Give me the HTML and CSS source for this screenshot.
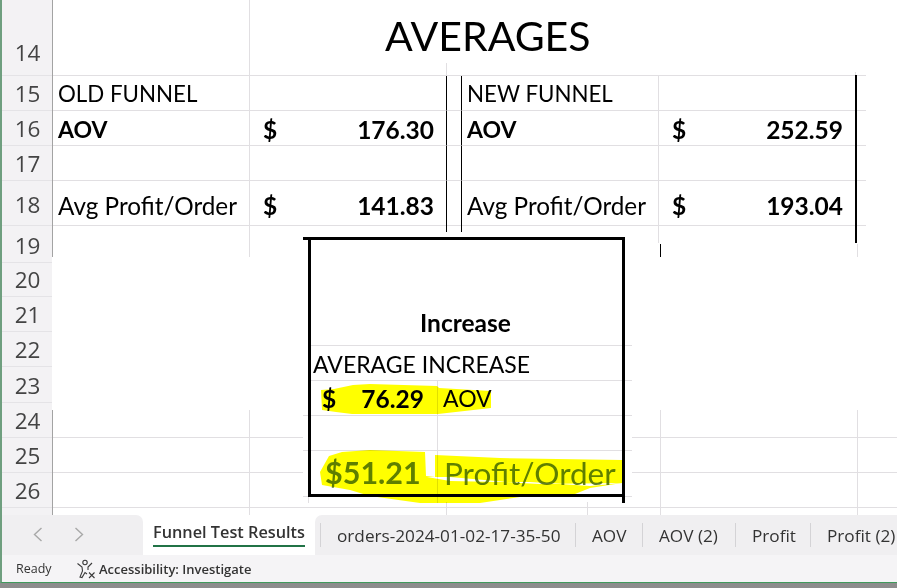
FILE: index.html
```html
<!DOCTYPE html>
<html lang="en">
<head>
    <meta charset="UTF-8">
    <meta name="viewport" content="width=device-width, initial-scale=1.0">
    <title>Funnel Test Results</title>
    <link rel="stylesheet" href="styles.css">
</head>
<body>

    <div class="window">
        <div class="sheet">
            <div class="row-heads">
                <div class="row-head row-head-first">14</div>
                <div class="row-head">15</div>
                <div class="row-head">16</div>
                <div class="row-head">17</div>
                <div class="row-head row-head-tall">18</div>
                <div class="row-head">19</div>
                <div class="row-head">20</div>
                <div class="row-head">21</div>
                <div class="row-head">22</div>
                <div class="row-head">23</div>
                <div class="row-head">24</div>
                <div class="row-head">25</div>
                <div class="row-head">26</div>
                <div class="row-head-end"></div>
            </div>

            <div class="cells">
                <div class="grid-top">
                    <div class="cell line-right"></div>
                    <div class="title-cell">AVERAGES</div>

                    <div class="cell line-right text-cell caps">OLD FUNNEL</div>
                    <div class="cell black-right"></div>
                    <div class="cell black-right"></div>
                    <div class="cell line-right text-cell caps">NEW FUNNEL</div>
                    <div class="cell black-right"></div>
                    <div class="cell"></div>

                    <div class="cell line-right text-cell bold">AOV</div>
                    <div class="cell black-right money"><span>$</span><span>176.30</span></div>
                    <div class="cell black-right"></div>
                    <div class="cell line-right text-cell bold">AOV</div>
                    <div class="cell black-right money"><span>$</span><span>252.59</span></div>
                    <div class="cell"></div>

                    <div class="cell line-right"></div>
                    <div class="cell black-right"></div>
                    <div class="cell black-right"></div>
                    <div class="cell line-right"></div>
                    <div class="cell black-right"></div>
                    <div class="cell"></div>

                    <div class="cell line-right text-cell text-low">Avg Profit/Order</div>
                    <div class="cell black-right money money-low"><span>$</span><span>141.83</span></div>
                    <div class="cell black-right"></div>
                    <div class="cell line-right text-cell text-low">Avg Profit/Order</div>
                    <div class="cell black-right money money-low"><span>$</span><span>193.04</span></div>
                    <div class="cell"></div>

                    <div class="row-19">
                        <div class="line-right"></div>
                    </div>

                    <i class="tick tick-black t-446"></i>
                    <i class="tick tick-black t-461"></i>
                    <i class="tick t-658"></i>
                    <i class="tick tick-black t-855"></i>
                    <i class="tick tick-black t-660"></i>
                    <i class="tick t-857"></i>
                    <i class="tick t-855-top"></i>
                    <i class="tick t-446-top"></i>
                </div>

                <div class="grid-gap"></div>

                <div class="grid-bottom">
                    <div class="low-cell line-right"></div>
                    <div class="low-cell"></div>
                    <div class="low-blank"></div>
                    <div class="low-cell line-right"></div>
                    <div class="low-cell line-right"></div>
                    <div class="low-cell"></div>

                    <div class="low-cell line-right"></div>
                    <div class="low-cell"></div>
                    <div class="low-cell line-right"></div>
                    <div class="low-cell line-right"></div>
                    <div class="low-cell"></div>

                    <div class="low-cell line-right"></div>
                    <div class="low-cell"></div>
                    <div class="low-cell line-right"></div>
                    <div class="low-cell line-right"></div>
                    <div class="low-cell"></div>

                    <div class="line-right"></div>
                    <div></div>
                    <div class="low-foot-mid"></div>
                    <div class="line-right"></div>
                    <div class="line-right"></div>
                    <div></div>
                </div>

                <!-- black box with the increase numbers, sits over the grid -->
                <div class="increase-box">
                    <div class="box-head">Increase</div>
                    <div class="box-row box-wide">AVERAGE INCREASE</div>
                    <div class="box-row box-split">
                        <div class="box-money"><span>$</span><span>76.29</span></div>
                        <div class="box-label">AOV</div>
                    </div>
                    <div class="box-row box-split">
                        <div class="box-money"></div>
                        <div class="box-label"></div>
                    </div>
                    <div class="box-row box-split box-last">
                        <div class="box-total">$51.21</div>
                        <div class="box-profit">Profit/Order</div>
                    </div>
                    <i class="box-overhang"></i>
                    <i class="box-tail"></i>
                </div>

                <!-- highlighter scribbles -->
                <svg class="scribbles" width="845" height="515" viewBox="52 0 845 515">
                    <polygon fill="#ffff00" points="321,390 334,389 353,385 370,384 437,386 439,388 491,391 491,408 438,414 352,414 336,412 322,410"/>
                    <polygon fill="#ffff00" points="329,456 342,452 370,450 425,452 426,476 435,477 435,455 500,458 622,460 622,483 590,488 570,496 520,497 480,503 420,503 370,496 350,490 322,485 320,472"/>
                    <polygon fill="#ffffff" points="427,477 450,477 520,483 540,484 622,483 590,486 530,482 500,482 450,481"/>
                </svg>
            </div>
        </div>

        <div class="tab-strip">
            <div class="tab-nav">
                <svg width="10" height="15" viewBox="0 0 10 15"><path d="M8.5 1 L1.5 7.5 L8.5 14" fill="none" stroke="#a8a8a8" stroke-width="1.4"/></svg>
                <svg width="10" height="15" viewBox="0 0 10 15"><path d="M1.5 1 L8.5 7.5 L1.5 14" fill="none" stroke="#a8a8a8" stroke-width="1.4"/></svg>
            </div>
            <div class="tab-active"><span>Funnel Test Results</span></div>
            <div class="tab-list">
                <div class="tab tab-orders">orders-2024-01-02-17-35-50</div>
                <div class="tab tab-aov">AOV</div>
                <div class="tab tab-aov2">AOV (2)</div>
                <div class="tab tab-profit">Profit</div>
                <div class="tab tab-profit2">Profit (2)</div>
            </div>
        </div>

        <div class="status-bar">
            <span class="status-ready">Ready</span>
            <svg class="status-icon" width="20" height="20" viewBox="0 0 20 20" fill="none" stroke="#3a3a3a" stroke-width="1.1">
                <circle cx="9" cy="3.5" r="2.2"/>
                <path d="M1.5 4.5 L6 8 L6.5 12 L4 18 L6 18.5 L9 13.5 L11 15"/>
                <path d="M16 4 L12 8 L12 11"/>
                <path d="M13 13.5 L18.5 19 M18.5 13.5 L13 19"/>
            </svg>
            <span class="status-access">Accessibility: Investigate</span>
        </div>
    </div>

</body>
</html>
```

FILE: styles.css
```css
:root {
    --grid: #e1dfe2;
    --head: #f3f2f4;
    --strip: #f0eff1;
    --status: #f5f4f6;
    --olive: #5f7f2a;
}

* {
    box-sizing: border-box;
}

body {
    margin: 0;
    width: 897px;
    height: 588px;
    overflow: hidden;
    background: linear-gradient(#2f2f2f, #8d8d8d);
    font-family: "Lato", sans-serif;
    color: #000;
}

.window {
    height: 583px;
    background-color: #fff;
    border-left: 2px solid #6f9f7f;
    border-bottom: 1px solid #3f9a5c;
    overflow: hidden;
}

.sheet {
    display: flex;
    height: 515px;
}

/* Row numbers */
.row-heads {
    width: 50px;
    display: grid;
    grid-template-rows: 76px 35px 35px 35px 45px 37px 34px 35px 35px 36px 35px 35px 35px 7px;
    background-color: var(--head);
}

.row-head {
    display: flex;
    align-items: flex-end;
    justify-content: center;
    padding-left: 1px;
    font-family: "Open Sans", sans-serif;
    font-size: 22.5px;
    line-height: 33px;
    color: #444;
    border-bottom: 1px solid #e4e3e6;
}

.row-head-first {
    padding-bottom: 6px;
}

.row-head-tall {
    padding-bottom: 4px;
}

.cells {
    position: relative;
    flex: 1;
    display: flex;
    flex-direction: column;
}

/* Top block of the sheet */
.grid-top {
    position: relative;
    height: 257px;
    width: 813px;
    display: grid;
    grid-template-columns: 197px 197px 15px 197px 197px 10px;
    grid-template-rows: 76px 35px 35px 35px 45px 31px;
    border-left: 1px solid #a3a3a3;
}

.cell {
    border-bottom: 1px solid var(--grid);
    display: flex;
    align-items: center;
}

.title-cell {
    grid-column: 2 / 7;
    border-bottom: 1px solid var(--grid);
    padding-left: 135px;
    font-size: 41px;
    line-height: 71px;
}

.line-right {
    border-right: 1px solid var(--grid);
}

.black-right {
    border-right: 1px solid #000;
}

.text-cell {
    padding-left: 5px;
    font-size: 23px;
}

.caps {
    font-size: 22.3px;
}

.text-low {
    padding-top: 5px;
    font-size: 24.3px;
}

.bold {
    padding-top: 2px;
    font-weight: 700;
}

.money {
    justify-content: space-between;
    padding: 2px 12px 0 13px;
    font-size: 24.5px;
    font-weight: 700;
}

.money-low {
    padding-top: 5px;
}

.row-19 {
    grid-column: 1 / 7;
    display: flex;
}

.row-19 div {
    width: 197px;
}

/* Short bits of line where the picture was pasted together */
.tick {
    position: absolute;
    width: 1px;
    background-color: var(--grid);
}

.tick-black {
    background-color: #000;
}

.t-446 { left: 393px; top: 225px; height: 7px; }
.t-461 { left: 408px; top: 225px; height: 7px; }
.t-658 { left: 605px; top: 225px; height: 18px; }
.t-855 { left: 802px; top: 75px; height: 168px; width: 2px; }
.t-660 { left: 607px; top: 244px; height: 13px; }
.t-857 { left: 804px; top: 244px; height: 13px; }
.t-855-top { left: 802px; top: 72px; height: 3px; }
.t-446-top { left: 393px; top: 63px; height: 12px; }

.grid-gap {
    height: 153px;
}

/* Bottom block of the sheet */
.grid-bottom {
    height: 105px;
    display: grid;
    grid-template-columns: 197px 53px 329px 29px 197px 39px;
    grid-template-rows: 28px 35px 35px 7px;
    border-left: 1px solid #a3a3a3;
}

.low-cell {
    border-bottom: 1px solid var(--grid);
}

.low-blank {
    grid-column: 3;
    grid-row: 1 / 4;
    border-bottom: 1px solid var(--grid);
    background-image:
        linear-gradient(var(--grid), var(--grid)),
        linear-gradient(var(--grid), var(--grid)),
        linear-gradient(var(--grid), var(--grid)),
        linear-gradient(var(--grid), var(--grid));
    background-size: 1px 6px;
    background-repeat: no-repeat;
    background-position: 5px 87px, 134px 87px, 284px 92px, 143px 92px;
}

.low-foot-mid {
    background-image:
        linear-gradient(var(--grid), var(--grid)),
        linear-gradient(var(--grid), var(--grid));
    background-size: 1px 100%;
    background-repeat: no-repeat;
    background-position: 143px 0, 284px 0;
}

/* Increase box */
.increase-box {
    position: absolute;
    left: 256px;
    top: 237px;
    width: 317px;
    height: 260px;
    display: flex;
    flex-direction: column;
    background-color: #fff;
}

.increase-box::after {
    content: "";
    position: absolute;
    inset: 0;
    border: 3px solid #000;
    pointer-events: none;
}

.box-overhang {
    position: absolute;
    left: -5px;
    top: 0;
    width: 6px;
    height: 3px;
    background-color: #000;
}

.box-tail {
    position: absolute;
    right: 0;
    top: 258px;
    width: 3px;
    height: 8px;
    background-color: #000;
}

.box-head {
    height: 109px;
    padding: 70px 0 0 112px;
    border-bottom: 1px solid var(--grid);
    margin-right: -7px;
    font-size: 24.5px;
    font-weight: 700;
    line-height: 32px;
}

.box-row {
    height: 35px;
    margin-right: -7px;
    border-bottom: 1px solid var(--grid);
}

.box-wide {
    padding-left: 5px;
    font-size: 23px;
    line-height: 36px;
}

.box-split {
    display: flex;
    margin-left: -5px;
}

.box-money {
    width: 135px;
    display: flex;
    justify-content: space-between;
    align-items: center;
    padding: 0 13px 0 19px;
    border-right: 1px solid var(--grid);
    font-size: 24.5px;
    font-weight: 700;
}

.box-label {
    padding-left: 5px;
    font-size: 23px;
    line-height: 34px;
}

.box-last {
    height: 46px;
}

.box-total {
    width: 135px;
    padding: 3px 0 0 22px;
    border-right: 1px solid var(--grid);
    font-size: 30.5px;
    font-weight: 700;
    color: var(--olive);
}

.box-profit {
    padding: 3px 0 0 6px;
    font-size: 31.5px;
    color: var(--olive);
}

.scribbles {
    position: absolute;
    left: 0;
    top: 0;
    mix-blend-mode: multiply;
    pointer-events: none;
}

/* Sheet tabs */
.tab-strip {
    display: flex;
    height: 40px;
    background-color: #fff;
    font-family: "Open Sans", sans-serif;
    font-size: 17.2px;
    color: #333;
}

.tab-nav {
    width: 141px;
    display: flex;
    align-items: center;
    gap: 31px;
    padding: 0 0 2px 31px;
    background-color: var(--strip);
    border-top-right-radius: 7px;
}

.tab-active {
    width: 172px;
    height: 35px;
    padding-left: 10px;
    background-color: #fff;
    border-bottom-left-radius: 7px;
    border-bottom-right-radius: 7px;
    font-size: 16.3px;
    font-weight: 600;
    line-height: 35px;
    white-space: nowrap;
}

.tab-active span {
    display: inline-block;
    height: 32px;
    border-bottom: 2px solid #217346;
    width: 152px;
}

.tab-list {
    flex: 1;
    display: flex;
    background-color: var(--strip);
    border-top-left-radius: 7px;
    white-space: nowrap;
    padding-left: 5px;
    overflow: hidden;
}

.tab {
    height: 24px;
    margin-top: 8px;
    line-height: 26px;
    padding-left: 16px;
    border-left: 1px solid #d4d3d6;
}

.tab-orders { width: 255px; }
.tab-aov { width: 67px; }
.tab-aov2 { width: 93px; }
.tab-profit { width: 75px; }
.tab-profit2 { width: 80px; }

/* Status bar */
.status-bar {
    display: flex;
    align-items: center;
    height: 27px;
    background-color: var(--status);
    font-family: "Open Sans", sans-serif;
    font-size: 13px;
    color: #333;
}

.status-ready {
    margin-left: 14px;
    width: 60px;
    font-size: 12.5px;
}

.status-access {
    margin-left: 3px;
    font-weight: 600;
}
```
